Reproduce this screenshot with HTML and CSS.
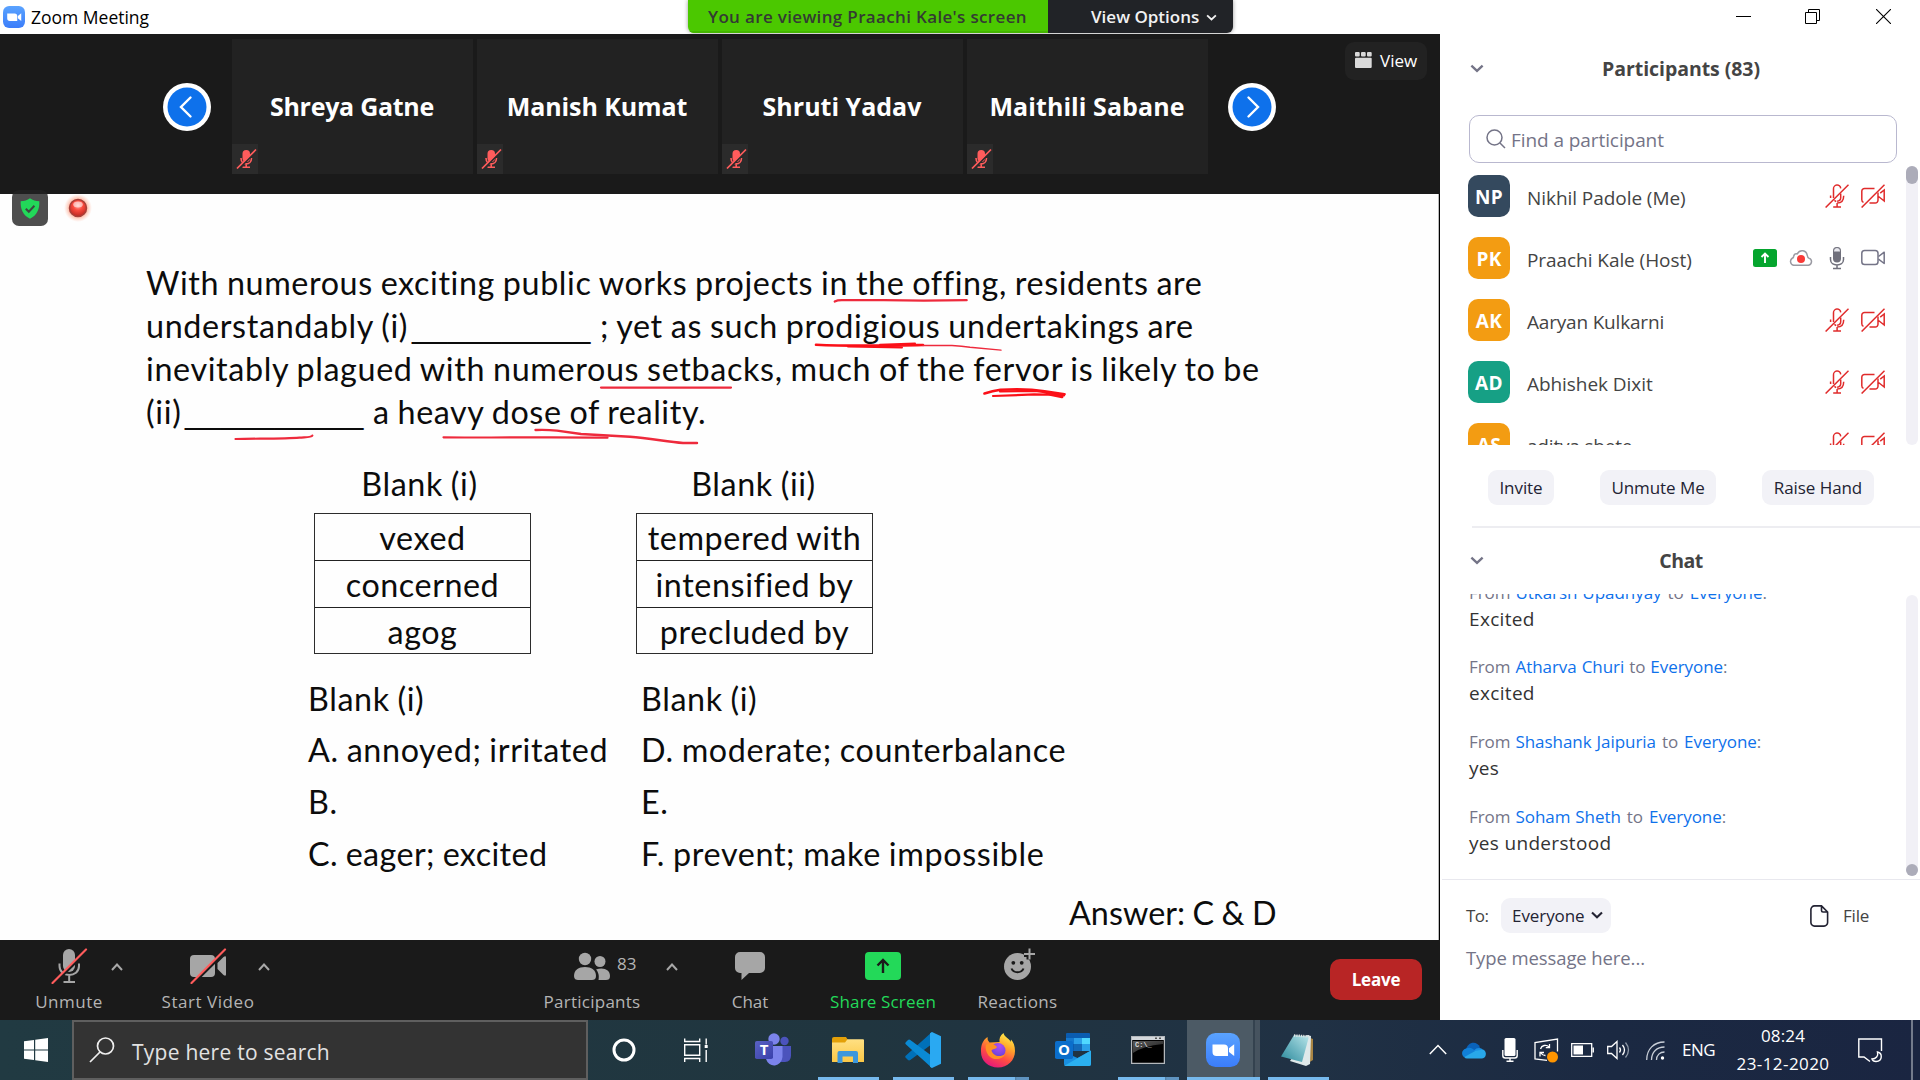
FILE: index.html
```html
<!DOCTYPE html>
<html lang="en">
<head>
<meta charset="utf-8">
<title>Zoom Meeting</title>
<link rel="stylesheet" href="styles.css">
</head>
<body>
<svg class="defs" width="0" height="0" aria-hidden="true">
  <defs>
    <linearGradient id="zoomBlue" x1="0" y1="0" x2="0" y2="1"><stop offset="0" stop-color="#5aa3ff"/><stop offset="1" stop-color="#3b7dfa"/></linearGradient>
    <linearGradient id="teamsT" x1="0" y1="0" x2="1" y2="1"><stop offset="0" stop-color="#5a62c3"/><stop offset="1" stop-color="#3940ab"/></linearGradient>
    <linearGradient id="folder" x1="0" y1="0" x2="0" y2="1"><stop offset="0" stop-color="#ffe083"/><stop offset="1" stop-color="#fbc846"/></linearGradient>
    <linearGradient id="fox" x1=".8" y1="0" x2=".3" y2="1"><stop offset="0" stop-color="#fff44f"/><stop offset=".35" stop-color="#ffa62a"/><stop offset=".65" stop-color="#ff5040"/><stop offset="1" stop-color="#e3157e"/></linearGradient>
    <radialGradient id="globe" cx=".6" cy=".2" r=".9"><stop offset="0" stop-color="#b04df5"/><stop offset=".6" stop-color="#7b45e0"/><stop offset="1" stop-color="#5a3ab8"/></radialGradient>
    <linearGradient id="pad" x1="1" y1="0" x2="0" y2="1"><stop offset="0" stop-color="#b9e6ea"/><stop offset=".5" stop-color="#6fb6c2"/><stop offset="1" stop-color="#2c8a9c"/></linearGradient>
    <radialGradient id="rec" cx=".5" cy=".35" r=".7"><stop offset="0" stop-color="#ffb0a8"/><stop offset=".4" stop-color="#fb4b3f"/><stop offset="1" stop-color="#b3221c"/></radialGradient>
    <radialGradient id="glow"><stop offset=".5" stop-color="#ff8c6e" stop-opacity=".9"/><stop offset="1" stop-color="#ffb9a0" stop-opacity="0"/></radialGradient>
    <linearGradient id="cmdShine" x1="0" y1="0" x2="1" y2="1"><stop offset="0" stop-color="#5a5a5a"/><stop offset="1" stop-color="#1b1b1b"/></linearGradient>
    <symbol id="tile-mute" viewBox="0 0 26 30">
      <rect x="10.5" y="6" width="7.5" height="12" rx="3.7" fill="#ff5c5c"/>
      <path d="M9 14c0 8 10.500 8 10.500 0M14.200 19v4M10.500 23.300h7.500" fill="none" stroke="#ff5c5c" stroke-width="1.600"/>
      <path d="M6.200 25.200L25 6.400" stroke="#2a2a2a" stroke-width="2"/>
      <path d="M5 24.500L24 5.500" stroke="#ff5c5c" stroke-width="1.700"/>
    </symbol>
    <symbol id="p-mic-off" viewBox="0 0 24 24">
      <g fill="none" stroke="#e02b2b" stroke-width="1.500">
        <path d="M8.500 14V5a3.600 3.600 0 0 1 7.200-.6M15.700 9.500v4.300c0 2-1.500 3.200-3.600 3.400M5.600 11.500v2.500M18.700 11.800c0 5-2.300 7.300-6.600 7.300M12.100 19v3.700M8.200 23h7.800M9.400 16.400l1.800 1.200"/>
        <path d="M.6 23.500L23.500.7"/>
      </g>
    </symbol>
    <symbol id="p-cam-off" viewBox="0 0 24 24">
      <g fill="none" stroke="#e02b2b" stroke-width="1.500">
        <path d="M13.500 4.500H3.500a2.700 2.700 0 0 0-2.700 2.700v8.600c0 1.300.7 2.200 1.700 2.600M8.500 19h5.800a2.700 2.700 0 0 0 2.700-2.700V8.500M17.500 12.500l5.700 4.500V6l-4 3.200"/>
        <path d="M.6 23.500L23.500.7"/>
      </g>
    </symbol>
    <symbol id="p-cam" viewBox="0 0 24 24">
      <g fill="none" stroke="#747487" stroke-width="1.500" stroke-linejoin="round">
        <rect x=".8" y="4.500" width="16.200" height="14" rx="2.800"/>
        <path d="M17.500 10.500l5.700-4.300v11.300l-5.700-4.300"/>
      </g>
    </symbol>
    <symbol id="chev" viewBox="0 0 12 8"><path d="M1 1.500l5 4.700 5-4.700" fill="none" stroke="currentColor" stroke-width="2.100"/></symbol>
    <symbol id="caret" viewBox="0 0 12 8"><path d="M1 7l5-5.500L11 7" fill="none" stroke="#a8a8a8" stroke-width="2"/></symbol>
    <symbol id="zoomlogo" viewBox="0 0 34 34">
      <rect width="34" height="34" rx="9.500" fill="url(#zoomBlue)"/>
      <path d="M6.500 11.500h11.500a4 4 0 0 1 4 4v7.500H10.500a4 4 0 0 1-4-4zM23 15.300l5.200-4v11.700l-5.200-4z" fill="#fff"/>
    </symbol>
  </defs>
</svg>

<header class="titlebar">
  <svg class="app-icon" viewBox="0 0 34 34"><use href="#zoomlogo"/></svg>
  <span class="app-name">Zoom Meeting</span>
  <div class="share-banner">
    <div class="viewing">You are viewing Praachi Kale's screen</div>
    <div class="options">View Options<svg width="11" height="7"><use href="#chev"/></svg></div>
  </div>
  <div class="winctl">
    <svg width="15" height="15" viewBox="0 0 15 15"><path d="M0 7.500h15" stroke="#000"/></svg>
    <svg width="15" height="15" viewBox="0 0 15 15"><path d="M.5 3.500h11v11h-11zM3.500 3.500v-3h11v11h-3" fill="none" stroke="#000"/></svg>
    <svg width="15" height="15" viewBox="0 0 15 15"><path d="M0 0l15 15M15 0L0 15" stroke="#000" stroke-width="1.100"/></svg>
  </div>
</header>

<main class="main">
  <section class="stage">
    <div class="strip">
      <svg class="arrow prev" width="48" height="48" viewBox="0 0 48 48"><circle cx="24" cy="24" r="24" fill="#fff"/><circle cx="24" cy="24" r="19.500" fill="#0e71eb"/><path d="M27.500 14.500L18 24l9.500 9.500" fill="none" stroke="#fff" stroke-width="2.400" stroke-linecap="round"/></svg>
      <div class="tiles">
        <div class="tile"><span class="n1">Shreya Gatne</span><svg class="mute" width="26" height="30"><use href="#tile-mute"/></svg></div>
        <div class="tile"><span class="n2">Manish Kumat</span><svg class="mute" width="26" height="30"><use href="#tile-mute"/></svg></div>
        <div class="tile"><span>Shruti Yadav</span><svg class="mute" width="26" height="30"><use href="#tile-mute"/></svg></div>
        <div class="tile"><span class="n4">Maithili Sabane</span><svg class="mute" width="26" height="30"><use href="#tile-mute"/></svg></div>
      </div>
      <svg class="arrow next" width="48" height="48" viewBox="0 0 48 48"><circle cx="24" cy="24" r="24" fill="#fff"/><circle cx="24" cy="24" r="19.500" fill="#0e71eb"/><path d="M20.500 14.500l9.500 9.500-9.500 9.500" fill="none" stroke="#fff" stroke-width="2.400" stroke-linecap="round"/></svg>
      <div class="viewbtn"><svg width="17" height="16" viewBox="0 0 17 16" fill="#dadada"><rect width="4.700" height="4.500" rx="1"/><rect x="6" width="4.700" height="4.500" rx="1"/><rect x="12" width="4.700" height="4.500" rx="1"/><rect y="5.800" width="16.700" height="10.200" rx="1"/></svg>View</div>
    </div>

    <div class="slide">
      <div class="badges">
        <div class="shield"><svg width="20" height="21" viewBox="0 0 20 21"><path d="M10 .3c2.500 2 6 2.800 9.300 2.900.5 7.800-2.300 14-9.300 17.500C3 17.200.2 11 .7 3.200 4 3.100 7.500 2.300 10 .3z" fill="#22d859"/><path d="M5.800 10.800l3 3 5.600-6" fill="none" stroke="#3d4a41" stroke-width="2"/></svg></div>
        <svg class="rec" width="30" height="30" viewBox="0 0 30 30"><circle cx="15" cy="15" r="14" fill="url(#glow)"/><circle cx="15" cy="15" r="8.500" fill="url(#rec)" stroke="#a8403a" stroke-width="1.500"/><ellipse cx="15" cy="11.500" rx="4.800" ry="3" fill="#fff" opacity=".55"/></svg>
      </div>
      <div class="para">
        <div class="l1">With numerous exciting public works projects in the offing, residents are</div>
        <div class="l2"><span class="w1">understandably (i)</span><span class="blank">__________</span><span class="w2">; yet as such prodigious undertakings are</span></div>
        <div class="l3">inevitably plagued with numerous setbacks, much of the fervor is likely to be</div>
        <div class="l4"><span class="w3">(ii)</span><span class="blank">__________</span><span class="w4">a heavy dose of reality.</span></div>
      </div>
      <div class="choices">
        <div class="choice c1"><h3>Blank (i)</h3><ul><li>vexed</li><li class="cn">concerned</li><li>agog</li></ul></div>
        <div class="choice c2"><h3>Blank (ii)</h3><ul><li class="tw">tempered with</li><li>intensified by</li><li>precluded by</li></ul></div>
      </div>
      <div class="answers">
        <div class="a1"><p>Blank (i)</p><p class="an">A. annoyed; irritated</p><p>B.</p><p class="ea">C. eager; excited</p></div>
        <div class="a2"><p>Blank (i)</p><p class="mo">D. moderate; counterbalance</p><p>E.</p><p class="pr">F. prevent; make impossible</p></div>
      </div>
      <div class="final">Answer: C &amp; D</div>
      <svg class="ink" viewBox="0 194 1438 746" fill="none" stroke="#ee2a3c" stroke-width="2.200" stroke-linecap="round">
        <path d="M834.700 301.500q3-1.600 9-1.300h40l40 .5 43-.5"/>
        <path d="M601 387.600h130"/>
        <path d="M235.500 439c28-.5 50-.3 64-1.400 7-.5 12-.2 12.800-2"/>
        <path d="M443.500 437.300c60 .6 110-.4 164 .4"/>
        <path d="M535.500 430q12-.4 21.500.6l24 3.400 49 2.800c20 1.400 38 5.200 53 6.200h14" stroke-width="2.400"/>
        <g stroke="#fb1018"><path d="M816 344.700c36 1.800 70 1 107 .3" stroke-width="2.600"/><path d="M848 346.500l54 1M880 344.800l35-1.300" stroke-width="2"/></g>
        <path d="M923 345.500l29 0q10 .6 18 1.800l31 2.800" stroke-width="1.400"/>
        <g stroke="#fb1018"><path d="M984.500 393.500q8-2.500 16-3.800 26-1.500 44 1.500l20 3" stroke-width="2.600"/><path d="M993 396l41-1.600 14 .2 16 .9M1000 391.500l35-.7 28 3.700" stroke-width="2.200"/><path d="M1051 394.500l11 2.200" stroke-width="3"/></g>
      </svg>
    </div>

    <nav class="toolbar">
      <div class="tool t-unmute"><svg width="40" height="36" viewBox="0 0 40 36"><rect x="14" y="1" width="12" height="23" rx="6" fill="#a6a6a6"/><path d="M10.500 15.500v2.500c0 12 19.500 12 19.500 0v-2.500M20.200 27.500v6M14.500 34h11.500" fill="none" stroke="#a6a6a6" stroke-width="2"/><path d="M4.500 36L38.500 2.500" stroke="#1a1a1a" stroke-width="3"/><path d="M3.500 35L37 1.500" stroke="#ff5c5c" stroke-width="2.200" stroke-linecap="round"/></svg><span>Unmute</span></div>
      <svg class="car k1" width="12" height="8"><use href="#caret"/></svg>
      <div class="tool t-video"><svg width="40" height="36" viewBox="0 0 40 36"><rect x="2" y="7" width="25" height="22" rx="4" fill="#a6a6a6"/><path d="M29.500 15l6-6q2.500-1.500 2.500.5v17q0 2-2.500.5l-6-6z" fill="#a6a6a6"/><path d="M4.500 36L38.500 2.500" stroke="#1a1a1a" stroke-width="3"/><path d="M3.500 35L37 1.500" stroke="#ff5c5c" stroke-width="2.200" stroke-linecap="round"/></svg><span>Start Video</span></div>
      <svg class="car k2" width="12" height="8"><use href="#caret"/></svg>
      <div class="tool t-people"><svg width="40" height="36" viewBox="0 0 40 36" fill="#a6a6a6"><circle cx="13" cy="11" r="6.200"/><circle cx="28" cy="13.500" r="5.500"/><path d="M2 28c0-6 4.500-9 11-9s11 3 11 9c0 3-2 4-4 4H6c-2 0-4-1-4-4z"/><path d="M26.500 32c1-5-.5-8.500-2.500-10.500 8-2.500 14 .5 14 6.500 0 3-1.500 4-4 4z"/></svg><b class="count">83</b><span>Participants</span></div>
      <svg class="car k3" width="12" height="8"><use href="#caret"/></svg>
      <div class="tool t-chat"><svg width="40" height="36" viewBox="0 0 40 36"><path d="M10 4h20a5 5 0 0 1 5 5v11a5 5 0 0 1-5 5H19l-7.500 7V25H10a5 5 0 0 1-5-5V9a5 5 0 0 1 5-5z" fill="#a6a6a6"/></svg><span>Chat</span></div>
      <div class="tool t-share"><svg width="40" height="36" viewBox="0 0 40 36"><rect x="2" y="4" width="36" height="28" rx="4" fill="#23d959"/><path d="M20 25V12.500M14.500 17.500l5.500-5.500 5.500 5.500" fill="none" stroke="#1a1a1a" stroke-width="2.400"/></svg><span>Share Screen</span></div>
      <div class="tool t-react"><svg width="40" height="36" viewBox="0 0 40 36"><circle cx="19.500" cy="18.500" r="13.500" fill="#a6a6a6"/><circle cx="15.300" cy="14.800" r="1.900" fill="#1a1a1a"/><circle cx="23.700" cy="14.800" r="1.900" fill="#1a1a1a"/><path d="M13.500 20.500c2 5 10 5 12 0" fill="none" stroke="#1a1a1a" stroke-width="2"/><path d="M31.500.5v11M26 6h11" stroke="#1a1a1a" stroke-width="6"/><path d="M31.500.5v11M26 6h11" stroke="#a6a6a6" stroke-width="2"/></svg><span>Reactions</span></div>
      <button class="leave">Leave</button>
    </nav>
  </section>

  <aside class="panel">
    <div class="phead"><svg width="14" height="9"><use href="#chev"/></svg><h2>Participants (83)</h2></div>
    <div class="search"><svg width="20" height="20" viewBox="0 0 20 20" fill="none" stroke="#747487" stroke-width="1.500"><circle cx="8.500" cy="8.500" r="7.500"/><path d="M14 14l5 5"/></svg><span>Find a participant</span></div>
    <div class="plist">
      <div class="people">
        <div class="person"><i class="av navy">NP</i><span>Nikhil Padole (Me)</span><svg width="24" height="24"><use href="#p-mic-off"/></svg><svg width="24" height="24"><use href="#p-cam-off"/></svg></div>
        <div class="person"><i class="av">PK</i><span>Praachi Kale (Host)</span>
          <svg width="24" height="24" viewBox="0 0 24 24"><rect y="3" width="24" height="18" rx="2.500" fill="#05a52e"/><path d="M12 17V8M8.500 11L12 7.600l3.500 3.400" fill="none" stroke="#fff" stroke-width="1.900"/></svg>
          <svg width="24" height="24" viewBox="0 0 24 24"><path d="M4.500 19.300a4 4 0 0 1-1-7.300c1 0 .8-.5 1.200-1.800a3 3 0 0 1 3.500-2.300c3-5 9-3.500 10 1.200.4 2 .5 2.500 1.600 3a3.700 3.700 0 0 1-.3 7.200z" fill="none" stroke="#9a9aa2" stroke-width="1.500"/><circle cx="12" cy="13" r="4" fill="#f93a37"/></svg>
          <svg width="24" height="24" viewBox="0 0 24 24"><rect x="8" y="1" width="8" height="15.500" rx="4" fill="#70707c"/><path d="M8.500 6V5a3.500 3.500 0 0 1 7 0v1z" fill="#e8e8ee" stroke="#70707c" stroke-width="1"/><path d="M5.500 11v2.500c0 7.200 13 7.200 13 0V11M12 19v3M8 22.500h8" fill="none" stroke="#70707c" stroke-width="1.500"/></svg>
          <svg width="24" height="24"><use href="#p-cam"/></svg></div>
        <div class="person"><i class="av">AK</i><span class="tight">Aaryan Kulkarni</span><svg width="24" height="24"><use href="#p-mic-off"/></svg><svg width="24" height="24"><use href="#p-cam-off"/></svg></div>
        <div class="person"><i class="av teal">AD</i><span>Abhishek Dixit</span><svg width="24" height="24"><use href="#p-mic-off"/></svg><svg width="24" height="24"><use href="#p-cam-off"/></svg></div>
        <div class="person"><i class="av">AS</i><span class="tight">aditya shete</span><svg width="24" height="24"><use href="#p-mic-off"/></svg><svg width="24" height="24"><use href="#p-cam-off"/></svg></div>
      </div>
      <div class="track"><div class="thumb"></div></div>
    </div>
    <div class="pbuttons"><button>Invite</button><button class="bw">Unmute Me</button><button class="br">Raise Hand</button></div>
    <div class="rule"></div>
    <div class="phead chead"><svg width="14" height="9"><use href="#chev"/></svg><h2 class="ch">Chat</h2></div>
    <div class="chat">
      <div class="msgs">
        <div class="msg"><p class="from">From <a>Utkarsh Upadhyay</a> <span>to</span> <a>Everyone</a>:</p><p class="body">Excited</p></div>
        <div class="msg"><p class="from">From <a>Atharva Churi</a> to <a>Everyone</a>:</p><p class="body">excited</p></div>
        <div class="msg"><p class="from">From <a>Shashank Jaipuria</a> <span>to</span> <a>Everyone</a>:</p><p class="body">yes</p></div>
        <div class="msg"><p class="from">From <a>Soham Sheth</a> <span>to</span> <a>Everyone</a>:</p><p class="body">yes understood</p></div>
      </div>
      <div class="track"><div class="thumb dot"></div></div>
    </div>
    <div class="compose">
      <div class="to"><span class="tolabel">To:</span><button>Everyone<svg width="12" height="8"><use href="#chev"/></svg></button>
        <svg class="file" width="19" height="22" viewBox="0 0 19 22" fill="none" stroke="#232333" stroke-width="1.600"><path d="M11.500.9H4.500A3.600 3.600 0 0 0 .9 4.500v13a3.600 3.600 0 0 0 3.600 3.600h9.500a3.600 3.600 0 0 0 3.600-3.600V7zV5.500q0 1.500 1.500 1.500h4.600"/></svg><span class="filelabel">File</span></div>
      <div class="input">Type message here...</div>
    </div>
  </aside>
</main>

<footer class="taskbar">
  <div class="start"><svg width="24" height="24" viewBox="0 0 24 24" fill="#fff"><path d="M0 3.300l10-1.400v9.500H0zM11.200 1.700L24 0v11.400H11.200zM0 12.600h10v9.500L0 20.700zM11.200 12.600H24V24l-12.800-1.700z"/></svg></div>
  <div class="winsearch"><svg width="26" height="26" viewBox="0 0 26 26" fill="none" stroke="#eee" stroke-width="1.700"><circle cx="16.500" cy="9" r="8"/><path d="M11 15L1 25"/></svg><span>Type here to search</span></div>
  <div class="slot"><svg width="24" height="24" viewBox="0 0 24 24"><circle cx="12" cy="12" r="10" fill="none" stroke="#fff" stroke-width="3"/></svg></div>
  <div class="slot tv"><svg width="24" height="24" viewBox="0 0 24 24" fill="none" stroke="#fff" stroke-width="1.400"><path d="M.7.500v3h15v-3M.7 24v-3.500h15V24M.7 6.700h15v10.500H.7zM22.200.500v6M22.200 12v12"/><path d="M20.700 7h3v3h-3z" fill="#fff" stroke="none"/></svg></div>

  <div class="task"><svg width="36" height="34" viewBox="0 0 36 34"><circle cx="29.500" cy="8" r="4.200" fill="#4b53bc"/><path d="M25 13h11v9.500q0 6-6 6.500h-5z" fill="#4b53bc"/><circle cx="19" cy="6" r="5.700" fill="#7b83eb"/><path d="M11 13h16.500v11a8.500 9.500 0 0 1-16.500 2z" fill="#7b83eb"/><rect y="8" width="18" height="18" rx="1.800" fill="url(#teamsT)"/><text x="9" y="22" text-anchor="middle" class="glyph">T</text></svg></div>
  <div class="task on"><svg width="36" height="34" viewBox="0 0 36 34"><path d="M2 6q0-2 2-2h12l2 3v6H2z" fill="#e3a008"/><path d="M2 9.500h13l2.500-3.300H33q1 0 1 1V29H2z" fill="url(#folder)"/><path d="M7.500 30V20q0-2 2-2H26q2 0 2 2v10h-5v-6.500H12.500V30z" fill="#3c97dc"/></svg></div>
  <div class="task on"><svg width="36" height="36" viewBox="0 0 36 36"><path d="M27 0L1 23.500q-1.500 1.200 0 2.500l2 2q1 .8 2.300 0L27 12z" fill="#0070b8"/><path d="M27 36L1 12.500q-1.500-1.200 0-2.500l2-2q1-.8 2.300 0L27 24z" fill="#0a8ad4"/><path d="M27 0l9 4.300v27.400L27 36l-2-1.200V1.200z" fill="#2aa9f2"/></svg></div>
  <div class="task on half"><svg width="36" height="36" viewBox="0 0 36 36"><path d="M23.500 1c-3.500 2.500-4.500 6-4 9L9.500 10.500Q7 8 7.500 5C3 8 .8 13 1 19.500.8 29 8.500 35.500 18 35.500S35 28.500 35 19c0-5-1.500-9-4-11.500-.3 1-.2 1.500 0 2.500C29 6 24 5 23.500 1z" fill="url(#fox)"/><circle cx="18" cy="18.500" r="7.500" fill="url(#globe)"/><path d="M6 12.500c5-2 9.500.5 11 2.500-1 2.500-4.500 1.500-5.500 3.500C13 24 20 26 25 22c-2 6-12 7-16.500 1.500C6 20 5 16 6 12.500z" fill="#ff8f24"/></svg></div>
  <div class="task"><svg width="36" height="34" viewBox="0 0 36 34"><path d="M11 1q0-1 1-1h22q1 0 1 1v17H11z" fill="#0a5cb0"/><path d="M11 5h8v6h-8z" fill="#1478ce"/><path d="M19 5h8v6h-8z" fill="#2b9fe8"/><path d="M27 5h8v6h-8z" fill="#50d9ff"/><path d="M19 11h8v7h-8z" fill="#1369b8"/><path d="M27 11h8v7h-8z" fill="#2aa0e8"/><path d="M9 19l13.500 6L36 17.500V31q0 2-2 2H11q-2 0-2-2z" fill="#1a8fe0"/><path d="M36 17.500L9 33h25q2 0 2-2z" fill="#2bb0f0"/><rect y="8" width="18" height="18" rx="1.800" fill="#0b6ecb"/><text x="9" y="22.200" text-anchor="middle" class="glyph">O</text></svg></div>
  <div class="task on half cmd"><svg width="34" height="28" viewBox="0 0 34 28"><rect x=".5" y=".5" width="33" height="27" fill="#000" stroke="#b4b8bc" stroke-width="1.500"/><path d="M1 1h32v3H1z" fill="#d4d8dc"/><path d="M24 1.500h2v1.500h-2zM28 1.500h2v1.500h-2z" fill="#555"/><path d="M2 5h30v3Q12 10 2 17z" fill="url(#cmdShine)"/><text x="4" y="11" class="prompt">C:\_</text></svg></div>
  <div class="active"><svg width="34" height="34" viewBox="0 0 34 34"><use href="#zoomlogo"/></svg></div>
  <div class="task on np"><svg width="36" height="34" viewBox="0 0 36 34"><path d="M28 4l5 2v21l-5 3z" fill="#a98544"/><path d="M27 2l4 1-1 28-4 2-16-5z" fill="#dfe9ea"/><path d="M14 2l15 1.500L22 29 1 23.500z" fill="url(#pad)"/><path d="M14 2.500l16 1" stroke="#dfe3e3" stroke-width="2.500" stroke-dasharray="1.300 1"/></svg></div>

  <div class="tray">
    <svg class="y1" width="18" height="11" viewBox="0 0 18 11"><path d="M.8 10L9 1.500 17.200 10" fill="none" stroke="#fff" stroke-width="1.500"/></svg>
    <svg class="y2" width="24" height="17" viewBox="0 0 24 17"><path d="M4 8C5 0 15-2 18 5.500L12 11z" fill="#0a62ba"/><path d="M4 6.500c4-2 7 0 9 2.500l-9 7C-1 15-1.500 8 4 6.500z" fill="#1180d8"/><path d="M12 8.500c3-4 9-3 9 .5-1 3-6 3-6 3z" fill="#1a8fe3"/><path d="M2.500 15L13 9l8-1.500c4 1.500 4 8.500-1 9H5q-2 0-2.500-1.500z" fill="#28a8ea"/></svg>
    <svg class="y3" width="16" height="24" viewBox="0 0 16 24"><rect x="2.500" y="0" width="11" height="18" rx="1.500" fill="#fff"/><path d="M.8 12v5.500q0 2.500 2.500 2.500h9.400q2.500 0 2.500-2.500V12M8 20v3M4.500 23.200h7" fill="none" stroke="#fff" stroke-width="1.400"/></svg>
    <svg class="y4" width="25" height="25" viewBox="0 0 25 25"><path d="M13 22.300L1 21V4.500L23.500 1v12.500" fill="none" stroke="#fff" stroke-width="1.300"/><path d="M6.500 11a5 5 0 0 1 8.500-2M15.500 6v3.700h-3.700M11.500 17.500a5 5 0 0 1-4.500-2.500M6 18.500V14.500H10" fill="none" stroke="#fff" stroke-width="1.300"/><circle cx="18.500" cy="19" r="5.500" fill="#ff9500"/></svg>
    <svg class="y5" width="23" height="14" viewBox="0 0 23 14"><path d="M.7.700h20v12.600H.7zM22.300 4.500v5" fill="none" stroke="#fff" stroke-width="1.300"/><path d="M2.500 2.500h9.500v9H2.500z" fill="#fff"/></svg>
    <svg class="y6" width="23" height="20" viewBox="0 0 23 20" fill="none" stroke="#fff" stroke-width="1.300"><path d="M.7 6.500h3.800L10 1.500v17L4.500 13.500H.7zM12.500 7.500q2 2.500 0 5M15.500 5q4 5 0 10"/><path d="M18.500 2.500q6 7.500 0 15" stroke="#8b95a3"/></svg>
    <svg class="y7" width="19" height="19" viewBox="0 0 19 19" fill="none" stroke="#c9cfd8" stroke-width="1.300"><path d="M.7 19C.7 8 8 1 18.500 1M5.500 19C5.500 11 11 6 18.500 6M10.500 19c0-5 3.500-8 8-8"/><circle cx="16.500" cy="17" r="1.700" fill="#fff" stroke="none"/></svg>
    <span class="lang">ENG</span>
    <div class="clock"><div class="time">08:24</div><div class="date">23-12-2020</div></div>
    <svg class="y8" width="25" height="25" viewBox="0 0 25 25" fill="none" stroke="#fff" stroke-width="1.400"><path d="M12 23.500L6 19H.8V1h22.700v12"/><path d="M19.500 14c5 1 5.500 9-1.500 9.500-2 0-3.500-1-4-2.500 4 0 6.500-3 5.500-7z"/></svg>
    <i class="peek"></i>
  </div>
</footer>
</body>
</html>
```

FILE: styles.css
```css
* { box-sizing: border-box; margin: 0; padding: 0; }
body { width: 1920px; height: 1080px; overflow: hidden; display: grid; grid-template-rows: 34px 986px 60px; background: #fff; font-family: "Open Sans", "Noto Sans", sans-serif; font-size: 17px; color: #444; }
button { border: 0; font: inherit; }
svg { display: block; flex: none; }
.defs { position: absolute; }
ul { list-style: none; }

/* title bar */
.titlebar { display: flex; background: #fff; }
.app-icon { width: 22px; height: 22px; margin: 6px 6px 0 3px; }
.app-name { font-size: 17.5px; line-height: 35px; color: #000; width: 657px; }
.share-banner { display: flex; width: 545px; height: 33px; border-radius: 0 0 6px 6px; overflow: hidden; font-weight: 600; line-height: 33px; box-shadow: 0 0 4px #999; white-space: nowrap; }
.viewing { width: 360px; background: #4bc800; color: #333a33; padding-left: 20px; letter-spacing: .34px; border-bottom: 2px solid #44b600; }
.options { flex: 1; background: #212327; color: #f2f2f2; padding: 0 0 1px 43px; display: flex; align-items: center; gap: 7px; }
.options svg { margin-top: 2px; }
.winctl { display: flex; margin: 9px 0 0 503px; gap: 54px; }
.winctl svg:last-child { margin-left: 2px; }

.main { display: grid; grid-template-columns: 1440px 480px; }
.stage { display: grid; grid-template-rows: 160px 746px 80px; background: #1a1a1a; }

/* video strip */
.strip { display: flex; align-items: flex-start; }
.arrow { margin-top: 49px; }
.prev { margin-left: 163px; }
.next { margin-left: 20px; }
.tiles { display: flex; gap: 4px; margin: 5px 0 0 21px; }
.tile { width: 241px; height: 135px; background: #222; position: relative; display: flex; align-items: center; justify-content: center; color: #fff; font-size: 25px; font-weight: 700; white-space: nowrap; padding: 0 1px 2px 0; }
.n1 { letter-spacing: -.28px; }
.n2 { letter-spacing: -.1px; }
.n4 { letter-spacing: .08px; }
.mute { position: absolute; left: 0; bottom: 0; background: #2b2b2b; }
.viewbtn { margin: 8px 0 0 69px; width: 82px; height: 38px; border-radius: 9px; background: #222; color: #fff; display: flex; align-items: center; gap: 8px; padding: 0 0 2px 10px; }

/* shared slide */
.slide { width: 1438px; margin-right: 2px; background: #fefefe; position: relative; font-family: Lato, "Liberation Sans", sans-serif; font-size: 32.3px; letter-spacing: .6px; word-spacing: -1px; color: #0c0c0c; white-space: nowrap; box-shadow: 1px 0 0 #bbb, 2px 0 0 #000; }
.badges { position: absolute; left: 12px; top: -4px; display: flex; align-items: center; gap: 15px; }
.shield { width: 36px; height: 36px; border-radius: 7px; background: rgba(34, 34, 34, .8); display: grid; place-items: center; }
.para { padding: 68px 0 0 146px; line-height: 42.9px; }
.para > div { display: flex; height: 42.9px; }
.l3 { letter-spacing: .64px; }
.w1 { width: 266px; letter-spacing: .65px; }
.w2 { padding-left: 9px; letter-spacing: .64px; }
.w3 { width: 39px; letter-spacing: .7px; }
.w4 { padding-left: 9px; letter-spacing: .6px; }
.blank { font-family: "Liberation Sans", Arial, sans-serif; font-size: 32.1px; letter-spacing: 0; width: 179px; padding-top: 1px; }
.choices { display: flex; gap: 105px; padding: 29px 0 0 314px; text-align: center; }
.choice h3 { font-weight: 400; font-size: inherit; line-height: 42px; height: 50.5px; padding-right: 2px; }
.choice ul { border: 1.500px solid #2c2c2c; }
.choice li { height: 46.4px; line-height: 47.5px; }
.choice li + li { border-top: 1.500px solid #222; }
.c1 { width: 217px; }
.choice.c1 h3 { padding-right: 6px; }
.c2 { width: 237px; }
.cn { letter-spacing: .55px; }
.answers { display: grid; grid-template-columns: 333px auto; padding: 18.500px 0 0 308px; line-height: 51.6px; }
.an { letter-spacing: .64px; }
.mo { letter-spacing: .64px; }
.ea { letter-spacing: .4px; }
.pr { letter-spacing: .65px; }
.final { padding: 13px 0 0 1069px; line-height: 42px; letter-spacing: .06px; }
.ink { position: absolute; left: 0; top: 0; width: 1438px; height: 746px; }

/* meeting toolbar */
.toolbar { display: flex; align-items: flex-start; color: #b4b4b4; background: #1a1a1a; }
.tool { display: flex; flex-direction: column; align-items: center; gap: 7px; padding-top: 8px; line-height: 22px; white-space: nowrap; position: relative; }
.car { margin-top: 23px; }
.t-unmute { width: 72px; margin-left: 33px; letter-spacing: .5px; }
.k1 { margin-left: 6px; }
.t-video { width: 96px; margin-left: 37px; letter-spacing: .55px; }
.k2 { margin-left: 2px; }
.t-people { width: 104px; margin-left: 270px; letter-spacing: .26px; }
.count { position: absolute; left: 77px; top: 13px; font-weight: 400; font-size: 17px; letter-spacing: 0; line-height: 22px; }
.k3 { margin-left: 22px; }
.t-chat { width: 50px; margin-left: 47px; }
.t-share { width: 110px; margin-left: 53px; color: #23d959; letter-spacing: .16px; }
.t-react { width: 85px; margin-left: 37px; letter-spacing: .36px; }
.leave { margin: 19px 0 0 270px; width: 92px; height: 41px; border-radius: 10px; background: #b82525; color: #fff; font-weight: 700; letter-spacing: -.2px; }

/* side panel */
.panel { background: #fff; display: flex; flex-direction: column; white-space: nowrap; }
.phead { height: 69px; display: flex; align-items: center; padding-left: 30px; color: #747487; }
.phead h2 { font-size: 19.5px; font-weight: 700; color: #444; flex: 1; text-align: center; padding-right: 42px; letter-spacing: -.06px; }
.chead { height: 66px; padding-bottom: 1px; }
.phead h2.ch { letter-spacing: -.5px; }
.search { margin: 12px 0 0 29px; width: 428px; height: 48px; border: 1.500px solid #b9b8cf; border-radius: 10px; display: flex; align-items: center; gap: 5px; padding-left: 16px; color: #747487; font-size: 19px; letter-spacing: -.08px; }
.search span { padding-top: 2px; }
.plist { height: 282px; padding-top: 1px; display: flex; overflow: hidden; }
.people { width: 445px; padding-left: 28px; height: 281px; overflow: hidden; }
.person { height: 62px; display: flex; align-items: center; gap: 12px; font-size: 19px; letter-spacing: -.06px; padding-top: 1px; }
.person span { flex: 1; padding: 4px 0 0 5px; }
.person span.tight { letter-spacing: -.19px; }
.av { width: 42px; height: 42px; border-radius: 10px; background: #f39c12; color: #fff; font-style: normal; font-weight: 700; letter-spacing: .3px; text-align: center; line-height: 45px; }
.navy { background: #34495e; }
.teal { background: #16a085; }
.track { width: 12px; margin-left: 21px; background: #f1f0f6; border-radius: 6px; margin-top: 2px; }
.thumb { height: 18px; border-radius: 6px; background: #acacb9; }
.dot { height: 12px; }
.pbuttons { display: flex; gap: 46px; padding: 25px 0 0 48px; }
.pbuttons button, .to button { height: 35px; border-radius: 9px; background: #f2f2f7; color: #232333; letter-spacing: -.07px; width: 66px; padding-bottom: 1px; }
.pbuttons .bw { width: 116px; }
.pbuttons .br { width: 112px; }
.rule { height: 2px; margin: 21px 0 0 32px; background: #ededf1; }
.chat { height: 286px; display: flex; border-bottom: 1px solid #e8e8ee; margin-left: 2px; overflow: hidden; }
.msgs { width: 443px; padding-left: 27px; overflow: hidden; }
.msg { height: 75px; line-height: 27.5px; }
.msg:first-child { margin-top: -16px; }
.msg:first-child .from { padding-top: 1px; margin-bottom: -1px; }
.from { color: #747487; letter-spacing: -.05px; word-spacing: .6px; }
.from a { color: #0e71eb; }
.from span { padding: 0 1px; }
.body { font-size: 19px; color: #333; letter-spacing: .32px; margin-top: -.5px; }
.chat .track { margin-bottom: 3px; margin-top: 1px; display: flex; align-items: flex-end; }
.chat .thumb { width: 12px; }
.compose { padding: 18px 0 0 26px; }
.to { display: flex; align-items: center; }
.tolabel { width: 35px; letter-spacing: -.6px; }
.to button { width: 110px; display: flex; align-items: center; gap: 6px; padding-left: 11px; }
.file { margin-left: 199px; }
.filelabel { margin-left: 14px; letter-spacing: -.2px; }
.input { margin-top: 11px; line-height: 28px; font-size: 18.5px; letter-spacing: -.1px; color: #747487; }

/* taskbar */
.taskbar { display: flex; background: linear-gradient(90deg, #213a42 0, #20353f 45%, #203144 68%, #1b2942 84%, #1a2541 100%); position: relative; }
.start { width: 72px; display: grid; place-items: center; }
.winsearch { width: 516px; border: 2px solid #5f5f5f; background: #333; display: flex; align-items: center; gap: 17px; padding-left: 15px; font-size: 21px; color: #e2e2e2; letter-spacing: .25px; }
.winsearch span { padding-top: 3px; }
.slot { width: 72px; display: grid; place-items: center; }
.slot.tv { width: 75px; }
.tv svg { margin-right: 3px; }
.task { width: 75px; display: grid; place-items: center; position: relative; }
.task.on::after { content: ""; position: absolute; left: 8px; right: 6px; bottom: 0; height: 3px; background: #76b9ed; }
.task.half::after { background: linear-gradient(90deg, #76b9ed 47px, #4f7da0 47px, #5f93bf 49px); }
.task.cmd svg { margin-bottom: 1px; }
.active { width: 73px; height: 60px; margin-left: 2px; padding: 13px 0 0 19px; background: linear-gradient(90deg, #4c5a65 66px, #34424f 66px, #34424f 68px, #46535f 68px); border-bottom: 3px solid #76b9ed; }
.glyph { font: 700 15px "Open Sans", sans-serif; fill: #fff; }
.prompt { font: 700 7px "Liberation Mono", monospace; fill: #ddd; word-spacing: 0; }
.tray { display: flex; align-items: flex-start; position: absolute; right: 0; top: 0; height: 60px; width: 491px; color: #fff; }
.y1 { margin-top: 24px; }
.y2 { margin: 22px 0 0 15px; }
.y3 { margin: 18px 0 0 16px; }
.y4 { margin: 18px 0 0 16px; }
.y5 { margin: 23px 0 0 12px; }
.y6 { margin: 20px 0 0 13px; }
.y7 { margin: 21px 0 0 16px; }
.lang { margin-left: 17px; width: 34px; line-height: 60px; letter-spacing: -.54px; }
.clock { margin: 2px 0 0 17px; width: 100px; text-align: center; line-height: 28px; }
.time { letter-spacing: .13px; }
.date { letter-spacing: .43px; }
.y8 { margin: 18px 0 0 25px; }
.peek { width: 2px; height: 60px; background: #737b8c; margin-left: 28px; }
```
